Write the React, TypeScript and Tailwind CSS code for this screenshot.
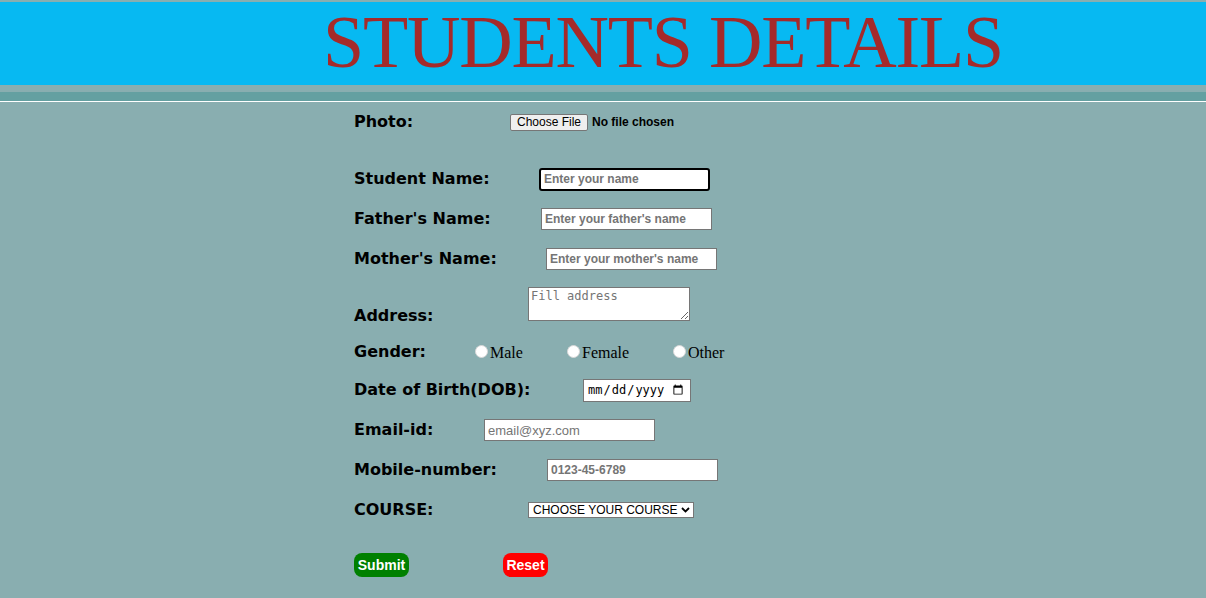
import React from 'react';

const labelCls = "shrink-0 text-[16px] font-bold text-black font-['DejaVu_Sans',sans-serif]";
const inputCls =
  "h-[22px] w-[171px] bg-white border border-[#767676] px-[3px] text-[12px] font-bold text-black placeholder:text-[#757575] font-['Liberation_Sans',Arial,sans-serif] outline-none";

const Row: React.FC<{ label: string; labelWidth: string; children: React.ReactNode; className?: string }> = ({
  label,
  labelWidth,
  children,
  className,
}) => (
  <div className={`flex items-center h-[40px] ${className || ''}`}>
    <span className={`${labelCls} ${labelWidth}`}>{label}</span>
    {children}
  </div>
);

const Radio: React.FC<{ label: string; width: string }> = ({ label, width }) => (
  <label className={`flex items-center ${width}`}>
    <input
      type="radio"
      name="gender"
      className="appearance-none w-[13px] h-[13px] rounded-full bg-white border border-[#d8d8d8] mr-[2px] mt-[-2px]"
    />
    <span className="text-[16px] text-black font-['Liberation_Serif',serif] leading-none mt-[2px]">{label}</span>
  </label>
);

export default function App() {
  return (
    <div className="min-h-[598px] bg-[#89aeb0] pt-[2px]">
      <div className="h-[83px] bg-[#07b9f2] pl-[323px] pt-[3px]">
        <h1 className="text-[74px] leading-none tracking-[-1.2px] text-[#a52a2a] font-['Liberation_Serif',serif] whitespace-nowrap">
          STUDENTS DETAILS
        </h1>
      </div>
      <div className="h-[7px]" />
      <div className="h-[9px] bg-[#64a0a1]" />
      <div className="h-px bg-white" />

      <form className="pl-[354px]">
        <Row label="Photo:" labelWidth="w-[156px]">
          <button
            type="button"
            className="h-[17px] px-[6px] bg-[#efefef] border border-[#767676] rounded-[2px] text-[12px] leading-none text-black font-['Liberation_Sans',Arial,sans-serif]"
          >
            Choose File
          </button>
          <span className="ml-[4px] text-[12px] font-bold text-black font-['Liberation_Sans',Arial,sans-serif]">
            No file chosen
          </span>
        </Row>

        <div className="h-[17px]" />

        <Row label="Student Name:" labelWidth="w-[185px]">
          <input
            className={`${inputCls} h-[23px] border-2 border-black rounded-[3px]`}
            placeholder="Enter your name"
          />
        </Row>
        <Row label="Father's Name:" labelWidth="w-[187px]">
          <input className={inputCls} placeholder="Enter your father's name" />
        </Row>
        <Row label="Mother's Name:" labelWidth="w-[192px]">
          <input className={inputCls} placeholder="Enter your mother's name" />
        </Row>

        <div className="flex items-end mt-[8px] h-[34px]">
          <span className={`${labelCls} w-[174px] mb-[-7px]`}>Address:</span>
          <textarea
            className="h-[34px] w-[162px] bg-white border border-[#767676] px-[2px] py-px text-[12px] leading-[14px] placeholder:text-[#757575] font-['DejaVu_Sans_Mono',monospace] outline-none resize"
            placeholder="Fill address"
          />
        </div>

        <Row label="Gender:" labelWidth="w-[121px]" className="mt-[11px]">
          <Radio label="Male" width="w-[92px]" />
          <Radio label="Female" width="w-[106px]" />
          <Radio label="Other" width="w-[60px]" />
        </Row>

        <Row label="Date of Birth(DOB):" labelWidth="w-[229px]" className="mt-[-2px]">
          <input
            type="date"
            className="h-[23px] w-[108px] bg-white border border-[#767676] pl-[3px] pr-[4px] text-[12px] text-black font-['DejaVu_Sans_Mono',monospace] outline-none"
          />
        </Row>

        <Row label="Email-id:" labelWidth="w-[130px]">
          <input
            className={`${inputCls} w-[170px] h-[21px] font-normal text-[13px]`}
            placeholder="email@xyz.com"
          />
        </Row>
        <Row label="Mobile-number:" labelWidth="w-[193px]">
          <input className={`${inputCls} w-[170px] h-[21px]`} placeholder="0123-45-6789" />
        </Row>
        <Row label="COURSE:" labelWidth="w-[174px]">
          <div className="relative w-[166px] h-[16px] bg-white border border-[#767676] flex items-center">
            <span className="pl-[4px] text-[12px] leading-none text-black font-['Liberation_Sans',Arial,sans-serif] whitespace-nowrap">
              CHOOSE YOUR COURSE
            </span>
            <svg
              className="absolute right-[3px] top-[4px]"
              width="9"
              height="6"
              viewBox="0 0 9 6"
              fill="none"
              stroke="black"
              strokeWidth="1.8"
            >
              <path d="M1 1l3.5 3.5L8 1" />
            </svg>
          </div>
        </Row>

        <div className="flex items-center mt-[23px] h-[24px]">
          <button
            type="submit"
            className="w-[55px] h-[24px] bg-[#008000] rounded-[8px] text-white text-[14px] font-bold font-['Liberation_Sans',Arial,sans-serif]"
          >
            Submit
          </button>
          <button
            type="reset"
            className="ml-[94px] w-[45px] h-[24px] bg-[#ff0000] rounded-[8px] text-white text-[14px] font-bold font-['Liberation_Sans',Arial,sans-serif]"
          >
            Reset
          </button>
        </div>
      </form>
    </div>
  );
}
